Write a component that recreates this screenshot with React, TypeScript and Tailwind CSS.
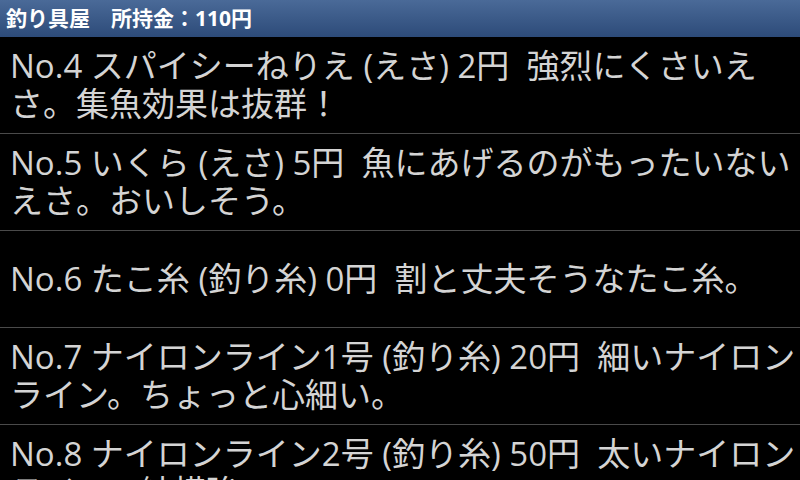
const items = [
  { no: 4, name: "スパイシーねりえ", kind: "えさ", price: 2, desc: "強烈にくさいえさ。集魚効果は抜群！" },
  { no: 5, name: "いくら", kind: "えさ", price: 5, desc: "魚にあげるのがもったいないえさ。おいしそう。" },
  { no: 6, name: "たこ糸", kind: "釣り糸", price: 0, desc: "割と丈夫そうなたこ糸。" },
  { no: 7, name: "ナイロンライン1号", kind: "釣り糸", price: 20, desc: "細いナイロンライン。ちょっと心細い。" },
  { no: 8, name: "ナイロンライン2号", kind: "釣り糸", price: 50, desc: "太いナイロンライン。結構強い。" },
];

export default function App() {
  return (
    <div
      className="w-[800px] h-[480px] overflow-hidden bg-black flex flex-col"
      style={{ fontFamily: '"Open Sans", "Noto Sans CJK JP", sans-serif' }}
    >
      {/* Title bar */}
      <div className="h-[37px] shrink-0 flex items-center pl-[6px] bg-gradient-to-b from-[#4a6a98] to-[#2d4b79]">
        <span className="text-white font-bold text-[21px] leading-none">
          釣り具屋　所持金：110円
        </span>
      </div>

      {/* Item list */}
      <div className="flex flex-col">
        {items.map((it) => (
          <div key={it.no} className="border-b border-[#4a4a4a]">
            <div className="min-h-[96px] flex items-center pl-[10px] pr-[3px]">
              <p className="text-[33px] leading-[38px] text-[#d4d4d4]">
                No.{it.no} {it.name} ({it.kind}) {it.price}円&nbsp; {it.desc}
              </p>
            </div>
          </div>
        ))}
      </div>
    </div>
  );
}
